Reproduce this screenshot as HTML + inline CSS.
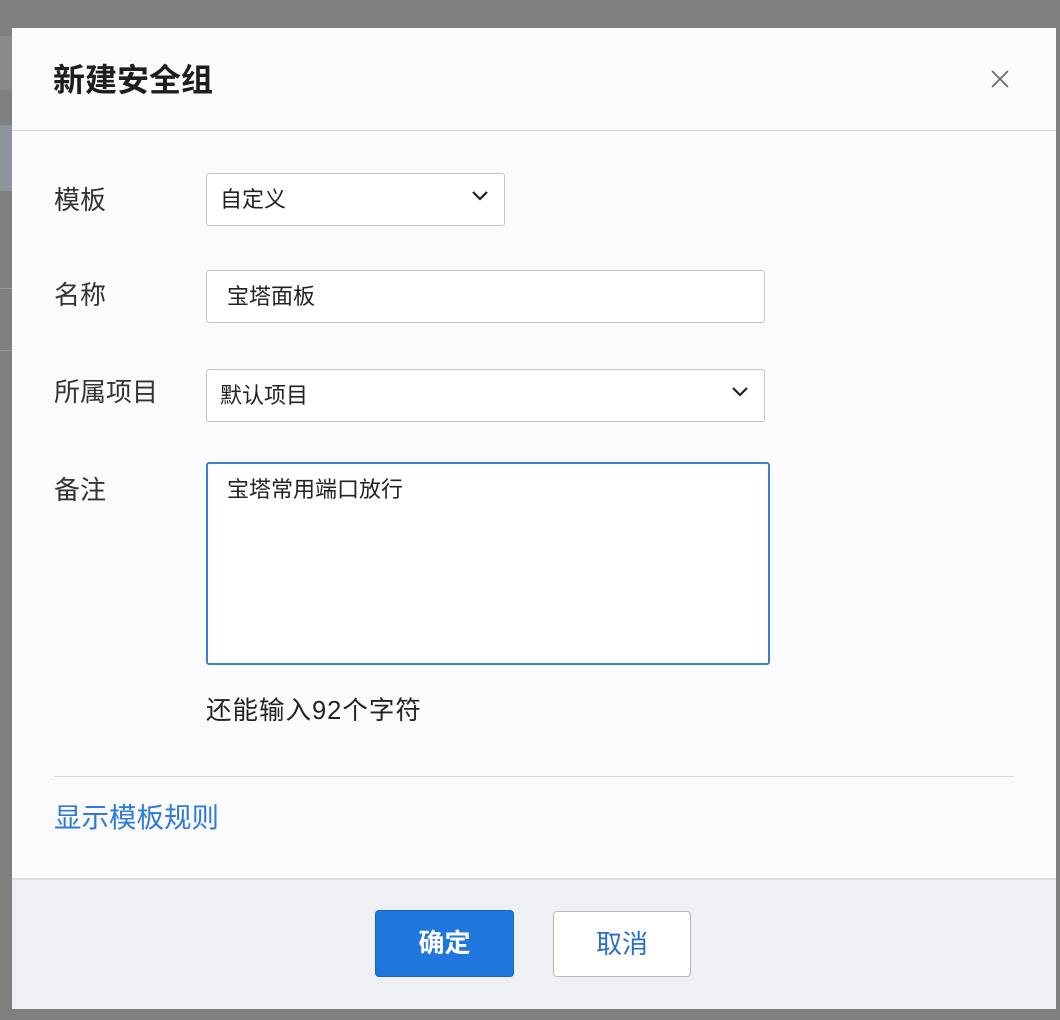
<!DOCTYPE html>
<html><head><meta charset="utf-8"><style>
*{margin:0;padding:0;box-sizing:border-box}
body{width:1060px;height:1020px;background:#7f7f7f;position:relative;overflow:hidden;font-family:"Liberation Sans","Noto Sans CJK SC",sans-serif;color:#222}
.bgl{position:absolute;left:0;width:12px}
.dlg{position:absolute;left:12px;top:28px;width:1044px;height:981px;background:#fbfbfd}
.abs{position:absolute}
.lbl{position:absolute;left:42px;font-size:26px;color:#333;line-height:30px}
.box{position:absolute;border:1px solid #c4c4c8;border-radius:3px;background:#fff;font-size:22px;line-height:30px;color:#222}
.chev{position:absolute;top:16px}
</style></head><body>
<div class="bgl" style="top:36px;height:54px;background:#8a8a8a"></div>
<div class="bgl" style="top:125px;height:66px;background:#8d959c"></div>
<div class="bgl" style="top:288px;height:1px;background:#999"></div>
<div class="bgl" style="top:350px;height:1px;background:#999"></div>
<div class="dlg">
 <div class="abs" style="left:41px;top:32px;font-size:32px;font-weight:bold;color:#1e1e1e;line-height:40px">新建安全组</div>
 <svg class="abs" style="left:978px;top:41px" width="20" height="20" viewBox="0 0 20 20"><path d="M2 2L18 18M18 2L2 18" stroke="#666" stroke-width="1.6"/></svg>
 <div class="abs" style="left:0;top:102px;width:1044px;height:1px;background:#d6d6dc"></div>

 <div class="lbl" style="top:157px">模板</div>
 <div class="box" style="left:194px;top:145px;width:299px;height:53px;padding:11px 0 0 13px">自定义
  <svg class="chev" style="left:264px" width="18" height="12" viewBox="0 0 18 12"><path d="M2 2L9 9L16 2" fill="none" stroke="#222" stroke-width="2.2"/></svg></div>

 <div class="lbl" style="top:252px">名称</div>
 <div class="box" style="left:194px;top:242px;width:559px;height:53px;padding:11px 0 0 20px">宝塔面板</div>

 <div class="lbl" style="top:349px">所属项目</div>
 <div class="box" style="left:194px;top:341px;width:559px;height:53px;padding:11px 0 0 13px">默认项目
  <svg class="chev" style="left:524px" width="18" height="12" viewBox="0 0 18 12"><path d="M2 2L9 9L16 2" fill="none" stroke="#222" stroke-width="2.2"/></svg></div>

 <div class="lbl" style="top:447px">备注</div>
 <div class="box" style="left:194px;top:434px;width:564px;height:203px;border:2px solid #3a7fd0;padding:11px 0 0 19px">宝塔常用端口放行</div>

 <div class="abs" style="left:194px;top:667px;font-size:25.5px;letter-spacing:1px;line-height:32px;color:#222">还能输入92个字符</div>
 <div class="abs" style="left:42px;top:748px;width:960px;height:1px;background:#d8d8dc"></div>
 <div class="abs" style="left:42px;top:774px;font-size:27.5px;line-height:32px;color:#2d7bd6">显示模板规则</div>

 <div class="abs" style="left:0;top:850px;width:1044px;height:131px;background:#eff0f4;border-top:2px solid #dcdde3"></div>
 <div class="abs" style="left:363px;top:882px;width:139px;height:67px;background:#1f76dc;border:1px solid #1a63b8;border-radius:4px;color:#fff;font-size:26px;font-weight:bold;line-height:65px;text-align:center">确定</div>
 <div class="abs" style="left:541px;top:883px;width:138px;height:66px;background:#fff;border:1px solid #b5b7bd;border-radius:4px;color:#2a6fc8;font-size:26px;line-height:64px;text-align:center">取消</div>
</div>
</body></html>
